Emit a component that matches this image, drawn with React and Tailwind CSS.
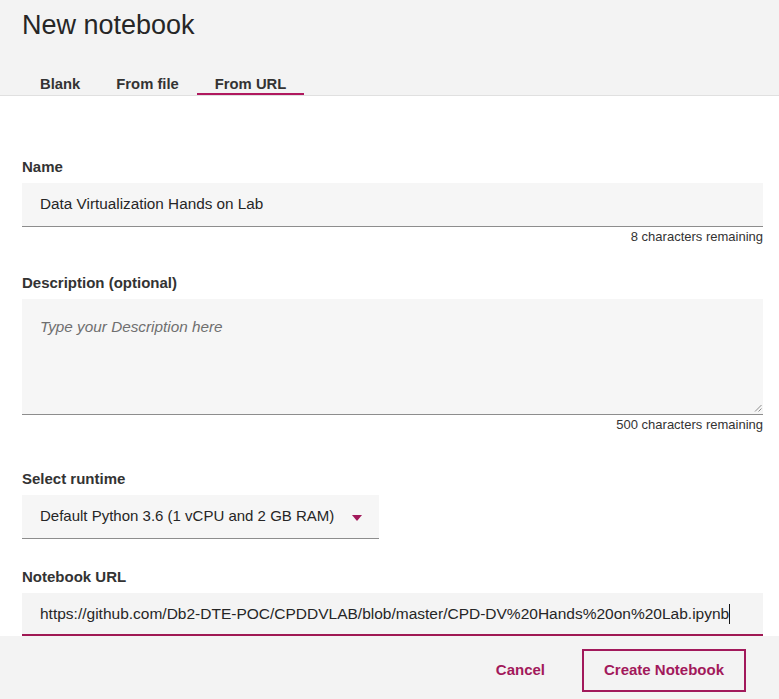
export default function App() {
  const tabs = ["Blank", "From file", "From URL"];
  const active = "From URL";

  return (
    <div className="w-[779px] h-[699px] flex flex-col overflow-hidden bg-white text-[#161616] font-['Liberation_Sans',Arial,sans-serif]">
      {/* header */}
      <div className="bg-[#f3f3f3] border-b border-[#e0e0e0] px-[22px] pt-[9px]">
        <h1 className="text-[27px] leading-[32px] text-[#262626]">New notebook</h1>
        <div className="flex mt-[34px]">
          {tabs.map((t) => (
            <button
              key={t}
              className={
                "px-[18px] text-[14.8px] leading-[18px] font-bold text-[#333] border-b-2 " +
                (t === active ? "border-[#b0185e]" : "border-transparent")
              }
            >
              {t}
            </button>
          ))}
        </div>
      </div>

      {/* body */}
      <div className="flex-1 overflow-hidden pl-[22px] pr-[16px] pt-[62px]">
        <label className="block text-[15px] leading-[18px] font-semibold text-[#333]">Name</label>
        <div className="mt-[7px] h-[44px] bg-[#f6f6f6] border-b border-[#8d8d8d] flex items-center px-[18px] text-[15.3px] text-[#262626]">
          Data Virtualization Hands on Lab
        </div>
        <p className="mt-[2px] text-right text-[13px] leading-[16px] text-[#333]">8 characters remaining</p>

        <label className="block mt-[29px] text-[15px] leading-[18px] font-semibold text-[#333]">Description (optional)</label>
        <div className="relative mt-[7px] h-[116px] bg-[#f6f6f6] border-b border-[#8d8d8d] px-[18px] pt-[19px]">
          <p className="italic text-[15.3px] leading-[18px] text-[#6f6f6f]">Type your Description here</p>
          <svg className="absolute right-[1px] bottom-[2px]" width="8" height="8" viewBox="0 0 8 8">
            <path d="M1 7.5 L7.5 1 M4.5 7.5 L7.5 4.5" stroke="#8d8d8d" strokeWidth="1" />
          </svg>
        </div>
        <p className="mt-[2px] text-right text-[13px] leading-[16px] text-[#333]">500 characters remaining</p>

        <label className="block mt-[37px] text-[15px] leading-[18px] font-semibold text-[#333]">Select runtime</label>
        <div className="mt-[7px] w-[357px] h-[44px] bg-[#f6f6f6] border-b border-[#8d8d8d] flex items-center justify-between pl-[18px] pr-[17px] text-[15px] text-[#262626]">
          <span>Default Python 3.6 (1 vCPU and 2 GB RAM)</span>
          <svg className="mt-[3px]" width="10" height="6" viewBox="0 0 10 6">
            <path d="M0 0 H10 L5 6 Z" fill="#a2195b" />
          </svg>
        </div>

        <label className="block mt-[29px] text-[15px] leading-[18px] font-semibold text-[#333]">Notebook URL</label>
        <div className="mt-[7px] h-[43px] bg-[#f4f4f4] border-b-2 border-[#9f1853] flex items-center px-[18px] text-[15.5px] text-[#262626] whitespace-nowrap">
          https://github.com/Db2-DTE-POC/CPDDVLAB/blob/master/CPD-DV%20Hands%20on%20Lab.ipynb
          <span className="inline-block w-px h-[20px] bg-[#161616]" />
        </div>
      </div>

      {/* footer */}
      <div className="h-[63px] bg-[#f3f3f3] flex justify-end items-start pt-[13px] pr-[33px] gap-[15px]">
        <button className="h-[43px] px-[22px] text-[15px] font-bold text-[#a2195b]">Cancel</button>
        <button className="h-[43px] w-[164px] border-2 border-[#a2195b] text-[15px] font-bold text-[#a2195b]">
          Create Notebook
        </button>
      </div>
    </div>
  );
}
